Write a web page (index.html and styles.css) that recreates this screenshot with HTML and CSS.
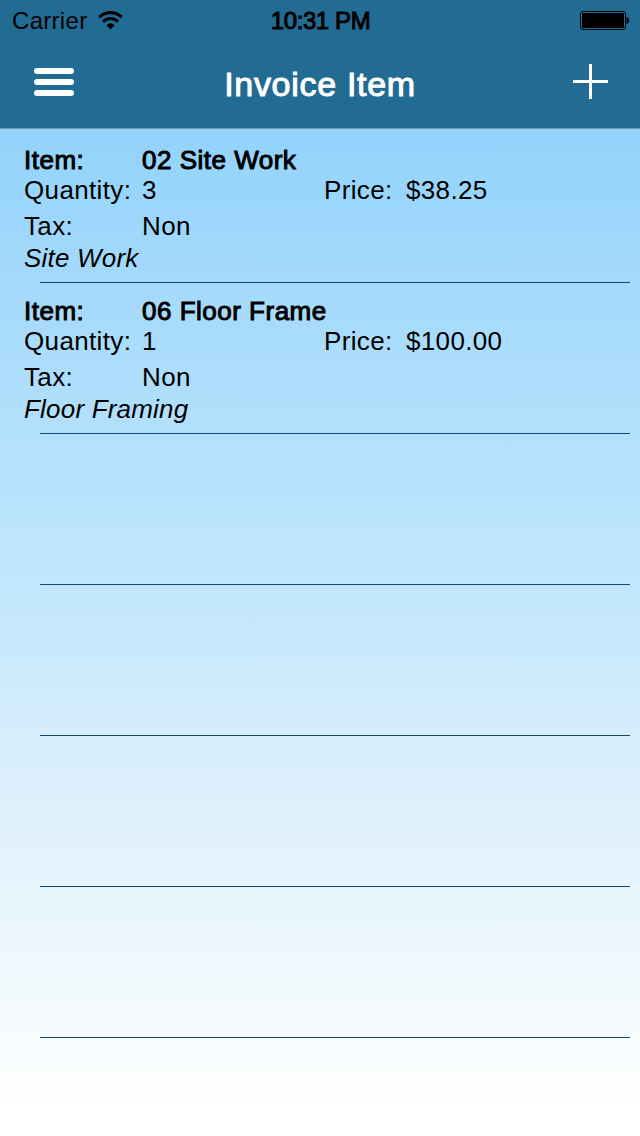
FILE: index.html
```html
<!DOCTYPE html>
<html lang="en">
<head>
    <meta charset="UTF-8">
    <meta name="viewport" content="width=device-width, initial-scale=1.0">
    <title>Invoice Item</title>
    <link rel="stylesheet" href="styles.css">
</head>
<body>

    <header class="header">
        <div class="status-bar">
            <div class="carrier">
                <span>Carrier</span>
                <svg class="wifi" width="26" height="20" viewBox="0 0 26 20">
                    <path d="M1.3 6.2 A16 16 0 0 1 23.7 6.2" fill="none" stroke="#000" stroke-width="3.3"/>
                    <path d="M5 10.7 A10.5 10.5 0 0 1 20 10.7" fill="none" stroke="#000" stroke-width="3"/>
                    <path d="M8.4 14.2 Q12.5 10.4 16.6 14.2 L12.5 18.6 Z"/>
                </svg>
            </div>
            <div class="time medium">10:31 PM</div>
            <svg class="battery" width="50" height="20" viewBox="0 0 50 20">
                <rect x="0.5" y="0.5" width="45" height="18" rx="2.5" fill="none" stroke="#000"/>
                <rect x="2" y="2" width="42" height="15" rx="1"/>
                <path d="M46.5 6 Q49 6.5 49 9.5 Q49 12.5 46.5 13 Z"/>
            </svg>
        </div>
        <div class="nav-bar">
            <svg class="menu-button" width="40" height="28" viewBox="0 0 40 28" fill="#fff">
                <rect width="40" height="6" rx="3"/>
                <rect y="11" width="40" height="6" rx="3"/>
                <rect y="22" width="40" height="6" rx="3"/>
            </svg>
            <h1 class="medium">Invoice Item</h1>
            <svg class="add-button" width="35" height="35" viewBox="0 0 35 35" fill="#fff">
                <rect x="16" width="3" height="35"/>
                <rect y="16" width="35" height="3"/>
            </svg>
        </div>
    </header>

    <main class="item-list">
        <div class="item">
            <div class="line medium"><span class="label">Item:</span><span class="value">02 Site Work</span></div>
            <div class="line"><span class="label">Quantity:</span><span class="value">3</span><span class="price-label">Price:</span><span class="price">$38.25</span></div>
            <div class="line tax"><span class="label">Tax:</span><span class="value">Non</span></div>
            <div class="line description">Site Work</div>
        </div>
        <div class="item">
            <div class="line medium"><span class="label">Item:</span><span class="value">06 Floor Frame</span></div>
            <div class="line"><span class="label">Quantity:</span><span class="value">1</span><span class="price-label">Price:</span><span class="price">$100.00</span></div>
            <div class="line tax"><span class="label">Tax:</span><span class="value">Non</span></div>
            <div class="line description">Floor Framing</div>
        </div>
        <div class="item"></div>
        <div class="item"></div>
        <div class="item"></div>
        <div class="item"></div>
    </main>

</body>
</html>
```
FILE: styles.css
```css
* {
    margin: 0;
    padding: 0;
    box-sizing: border-box;
}

body {
    width: 640px;
    height: 1136px;
    overflow: hidden;
    font-family: "Liberation Sans", Arial, sans-serif;
    font-size: 26px;
    color: #000;
    background: linear-gradient(#92d3fb 128px, #a5dafb 290px, #c5e8fd 620px, #d6edfb 740px, #ffffff 1110px);
}

/* weight between regular and bold */
.medium {
    font-weight: normal;
    -webkit-text-stroke: 1px currentColor;
}

.header {
    height: 129px;
    background: #226c94;
    border-bottom: 1px solid #6c9bb5;
}

.status-bar {
    display: grid;
    grid-template-columns: 1fr auto 1fr;
    height: 41px;
    padding: 0 11px 0 12px;
    align-items: center;
    font-size: 24px;
}

.carrier {
    display: flex;
    align-items: center;
    gap: 11px;
    letter-spacing: 0.3px;
}

.wifi {
    margin-top: 1px;
}

.time {
    letter-spacing: -0.4px;
}

.battery {
    justify-self: end;
    margin-right: -1px;
}

.nav-bar {
    display: flex;
    justify-content: space-between;
    align-items: center;
    height: 87px;
    padding: 0 32px 0 34px;
}

.nav-bar h1 {
    font-size: 34px;
    letter-spacing: 0.7px;
    margin-right: 7px;
    color: #fff;
}

.menu-button {
    margin-bottom: 5px;
}

.add-button {
    margin-bottom: 6px;
}

.item-list {
    padding-top: 3px;
}

.item {
    height: 151px;
    padding: 13px 10px 0 24px;
    background: linear-gradient(#0e4a75, #0e4a75) 40px 100% / 590px 1px no-repeat;
}

.line {
    display: flex;
    height: 30px;
    line-height: 30px;
    letter-spacing: 0.35px;
    white-space: nowrap;
}

.line.medium {
    letter-spacing: 0.5px;
}

.label {
    width: 118px;
}

.value {
    width: 182px;
}

.price-label {
    width: 82px;
}

.tax {
    margin-top: 6px;
}

.description {
    margin-top: 2px;
    letter-spacing: 0.2px;
    font-style: italic;
}
```
